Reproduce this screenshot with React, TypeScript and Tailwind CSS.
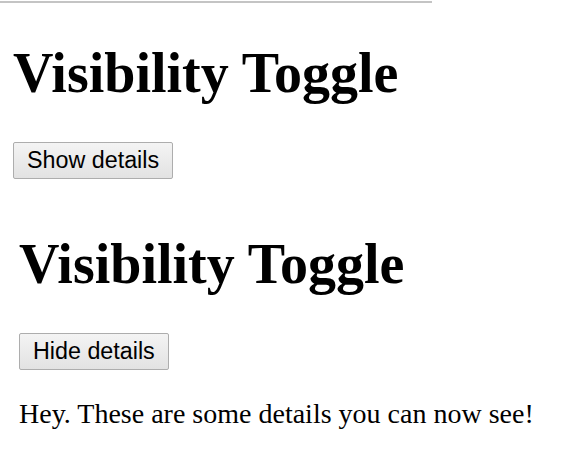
import { useState } from 'react';

interface ToggleProps {
  /** Start with the details shown. */
  initialOpen?: boolean;
  className?: string;
}

function VisibilityToggle({ initialOpen = false, className = '' }: ToggleProps) {
  const [open, setOpen] = useState(initialOpen);

  return (
    <div className={className}>
      <h1 className="font-['Liberation_Serif',serif] text-[56px] font-bold leading-[64px] text-black">
        Visibility Toggle
      </h1>
      <button
        type="button"
        onClick={() => setOpen((v) => !v)}
        className="mt-[37px] block rounded-[2px] border border-[#adadad] bg-gradient-to-b from-[#f4f4f4] to-[#e2e2e2]
                   px-[13px] py-[4px] font-['Liberation_Sans',Arial,sans-serif] text-[23.3px] leading-[27px] text-black"
      >
        {open ? 'Hide details' : 'Show details'}
      </button>
      {open && (
        <p className="mt-[28px] font-['Liberation_Serif',serif] text-[28px] leading-[32px] text-black">
          Hey. These are some details you can now see!
        </p>
      )}
    </div>
  );
}

export default function App() {
  return (
    <div className="min-h-[458px] w-[580px] bg-white">
      {/* thin rule across the top of the page */}
      <div className="mt-px h-[2px] w-[432px] bg-[#c4c4c4]" />
      <VisibilityToggle className="mt-[38px] pl-[13px]" />
      <VisibilityToggle initialOpen className="mt-[53px] pl-[19px]" />
    </div>
  );
}
